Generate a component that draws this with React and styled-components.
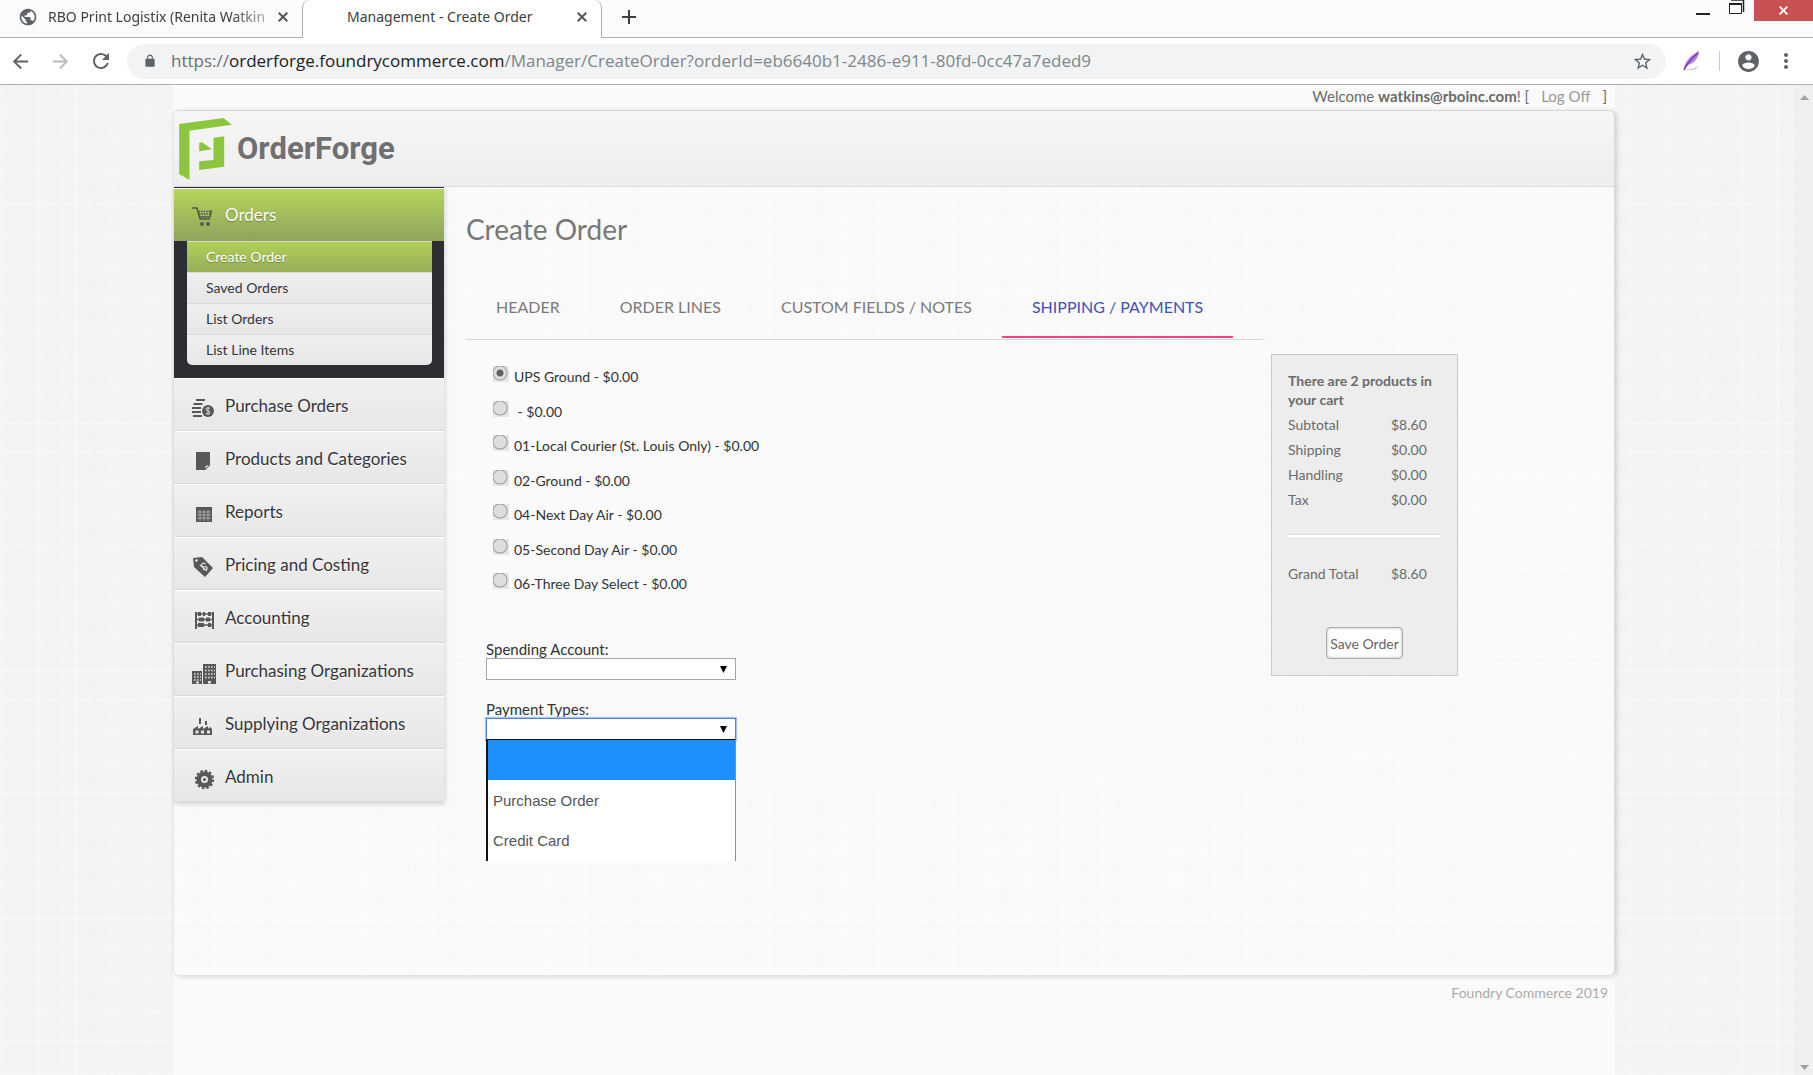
import React, { useState } from "react";
import styled, { createGlobalStyle, css } from "styled-components";

const siteFont = '"Lato", "Open Sans", sans-serif';
const chromeFont = '"Noto Sans", "Open Sans", sans-serif';

const GlobalStyle = createGlobalStyle`
  *, *::before, *::after { box-sizing: border-box; }
  body { margin: 0; background: #f4f4f4; font-family: ${siteFont}; color: #6b6b6b; }
  ul { list-style: none; margin: 0; padding: 0; }
  button { font-family: inherit; cursor: pointer; }
  a { text-decoration: none; color: inherit; }
`;

const linen = css`
  background-image:
    repeating-linear-gradient(90deg, rgba(0, 0, 0, 0.004) 0 2px, transparent 4px 9px, rgba(0, 0, 0, 0.004) 10px 11px, transparent 13px 23px),
    repeating-linear-gradient(90deg, rgba(255, 255, 255, 0.2) 0 3px, transparent 6px 17px, rgba(0, 0, 0, 0.004) 19px, transparent 21px 37px),
    repeating-linear-gradient(0deg, rgba(0, 0, 0, 0.004) 0 1px, transparent 3px 8px, rgba(0, 0, 0, 0.004) 9px 11px, transparent 12px 19px),
    repeating-linear-gradient(0deg, rgba(255, 255, 255, 0.2) 0 2px, transparent 5px 14px, rgba(0, 0, 0, 0.004) 16px, transparent 18px 31px);
`;

const Window = styled.div`
  min-height: 100vh;
  display: flex;
  flex-direction: column;
`;

/* ---------- browser chrome ---------- */

const TabStrip = styled.header`
  display: flex;
  height: 38px;
  background: #fbfbfb;
  border-bottom: 1px solid #b0b0b0;
  font-family: ${chromeFont};
`;

const PlainButton = styled.button`
  display: flex;
  align-items: center;
  justify-content: center;
  width: ${(p) => p.$w}px;
  height: ${(p) => p.$h || 34}px;
  padding: 0;
  border: 0;
  background: ${(p) => p.$bg || "transparent"};
  color: ${(p) => p.$color || "#55585c"};
`;

const BrowserTab = styled.div`
  display: flex;
  align-items: center;
  width: ${(p) => (p.$active ? 300 : 302)}px;
  height: 38px;
  padding: 0 8px 4px ${(p) => (p.$active ? 44 : 18)}px;
  ${(p) =>
    p.$active &&
    css`
      background: #fff;
      border: 1px solid #b0b0b0;
      border-width: 0 1px;
      border-radius: 8px 8px 0 0;
    `}
`;

const TabTitle = styled.span`
  flex: 1;
  white-space: nowrap;
  font-size: 14px;
  line-height: 20px;
  margin-left: ${(p) => (p.$icon ? 10 : 0)}px;
  color: #3c4043;
  ${(p) => p.$icon && "mask-image: linear-gradient(90deg, #000 82%, rgba(0, 0, 0, 0.3) 100%);"}
`;

const WindowButtons = styled.div`
  display: flex;
  align-items: flex-start;
  margin-left: auto;
`;

const Toolbar = styled.div`
  display: flex;
  align-items: center;
  height: 47px;
  padding: 0 8px 0 0;
  background: #fff;
  border-bottom: 1px solid #b0b0b0;
`;

const Omnibox = styled.div`
  display: flex;
  align-items: center;
  flex: 1;
  height: 35px;
  margin: 0 8px 0 6px;
  padding: 0 6px 0 16px;
  border-radius: 18px;
  background: #f1f3f4;
  font: 17px/24px "Open Sans", "Noto Sans", sans-serif;
  color: #80868b;
`;

const Url = styled.span`
  flex: 1;
  margin-left: 14px;
  white-space: nowrap;
  b { font-weight: 400; color: #202124; }
  i { font-style: normal; color: #6b6f73; }
`;

const Divider = styled.span`
  width: 1px;
  height: 20px;
  margin: 0 9px;
  background: #c8cacc;
`;

/* ---------- page shell ---------- */

const Viewport = styled.div`
  flex: 1;
  display: flex;
`;

const Page = styled.div`
  flex: 1;
  display: flex;
  padding: 0 180px 0 173px;
  ${linen}
`;

const ScrollTrack = styled.div`
  display: flex;
  flex-direction: column;
  justify-content: space-between;
  align-items: center;
  width: 18px;
  padding: 10px 0 5px;
  background: #f0f0f0;
`;

const Column = styled.div`
  flex: 1;
  background: #fafafa;
`;

const Welcome = styled.div`
  display: flex;
  justify-content: flex-end;
  height: 25px;
  padding-right: 8px;
  font-size: 15px;
  line-height: 23px;
  white-space: pre;
  a { margin: 0 12px; color: #999; }
`;

const Box = styled.div`
  min-height: 866px;
  border: 1px solid #d8d8d8;
  border-left-color: #e8e8e8;
  border-bottom-color: #e4e4e4;
  border-radius: 6px;
  background-color: #fafafa;
  box-shadow: 2px 1px 5px rgba(0, 0, 0, 0.14);
  ${linen}
`;

const Brand = styled.div`
  display: flex;
  align-items: center;
  gap: 5px;
  height: 76px;
  padding: 0 5px;
  border-bottom: 1px solid #ddd;
  border-radius: 6px 6px 0 0;
  background: linear-gradient(#f6f6f6, #eee);
  color: #707070;
  font: 700 31px/36px Roboto, sans-serif;
`;

const Body = styled.div`
  display: flex;
  align-items: flex-start;
`;

/* ---------- side menu ---------- */

const Side = styled.nav`
  width: 270px;
  border-top: 1px solid #2e2d33;
  box-shadow: 1px 2px 5px rgba(0, 0, 0, 0.16);
`;

const MenuLink = styled.a`
  display: flex;
  align-items: center;
  height: 53px;
  padding: 2px 18px 0;
  gap: 9px;
  border-top: 1px solid #fff;
  border-bottom: 1px solid #d9d9d9;
  background: linear-gradient(#f0f0f0, #e7e7e7);
  color: #35353a;
  font-size: 17px;
  text-shadow: 0 1px 0 #fff;
  svg { margin-top: 5px; }
  ${(p) =>
    p.$active &&
    css`
      padding: 0 18px 2px;
      border-bottom: 0;
      background: linear-gradient(#b5d55a, #8fa35d);
      color: #fff;
      text-shadow: 0 1px 1px rgba(0, 0, 0, 0.3);
    `}
`;

const SubMenu = styled.ul`
  padding: 0 12px 13px 13px;
  background: #2e2d33;
  li:last-child a { border-radius: 0 0 5px 5px; }
`;

const SubLink = styled.a`
  display: block;
  padding: 0 19px 1px;
  border-top: 1px solid #d9d9d9;
  background: linear-gradient(#f0f0f0, #e6e6e6);
  color: #35353a;
  font-size: 14px;
  line-height: 29px;
  ${(p) =>
    p.$active &&
    css`
      background: linear-gradient(#b0d055, #98ae5b);
      color: #fff;
      text-shadow: 0 1px 1px rgba(0, 0, 0, 0.3);
    `}
`;

/* ---------- order form ---------- */

const Main = styled.main`
  flex: 1;
  padding: 24px 156px 0 22px;
`;

const Title = styled.h1`
  margin: 0;
  font-size: 28px;
  font-weight: 400;
  line-height: 36px;
  color: #777;
`;

const Row = styled.div`
  display: flex;
  align-items: flex-start;
  gap: 8px;
`;

const FormColumn = styled.div`
  flex: 1;
`;

const Tabs = styled.div`
  display: flex;
  margin-top: 28px;
  border-bottom: 1px solid #d6d6d6;
`;

const Tab = styled.button`
  height: 63px;
  margin-bottom: 1px;
  padding: 2px 30px 0;
  border: 0;
  border-bottom: 2px solid ${(p) => (p.$active ? "#ff4081" : "transparent")};
  background: none;
  font-size: 16px;
  white-space: nowrap;
  color: ${(p) => (p.$active ? "#3f51b5" : "#7a7a7a")};
`;

const Panel = styled.div`
  min-height: 440px;
  padding: 26px 20px 0;
  background: #fafafa;
  color: #333;
  font-size: 14px;
`;

const Options = styled.div`
  display: flex;
  flex-direction: column;
  justify-content: space-between;
  min-height: 229px;
  margin: 0 0 45px;
  padding-left: 7px;
`;

const Option = styled.label`
  display: flex;
  gap: 5px;
  height: 22px;
  line-height: 22px;
  white-space: pre;
`;

const Radio = styled.input`
  appearance: none;
  width: 16px;
  height: 16px;
  margin: 0;
  background:
    radial-gradient(circle at 7px 7px, ${(p) => (p.checked ? "#606060 0 3px, " : "")}#dedede 4px 6px, #9a9a9a 7px, #e6e6e6 8px);
`;

const Field = styled.div`
  display: flex;
  flex-direction: column;
  width: 250px;
  margin-bottom: 20px;
  label { font-size: 15px; line-height: 18px; }
`;

const SelectWrap = styled.div`
  position: relative;
  display: flex;
`;

const Select = styled.select`
  appearance: none;
  flex: 1;
  height: 22px;
  padding: 0 24px 0 4px;
  border: 1px solid ${(p) => (p.$open ? "#4f86dd" : "#a6a6a6")};
  border-radius: 0;
  background: #fff;
  outline: 0;
  box-shadow: ${(p) => (p.$open ? "0 0 1px 1px #a8c4f0" : "none")};
`;

const Caret = styled.svg`
  position: absolute;
  right: 9px;
  top: 8px;
  pointer-events: none;
`;

const List = styled.ul`
  position: absolute;
  top: 21px;
  left: 0;
  right: 0;
  z-index: 2;
  padding-bottom: 1px;
  border: 1px solid #6f93cf;
  border-width: 1px 1px 0;
  border-top-color: #111;
  border-left: 2px solid #111;
  background: #fff;
`;

const ListItem = styled.li`
  height: 40px;
  padding: 0 5px;
  font: 15px/42px "Liberation Sans", Arial, sans-serif;
  color: #555;
  background: ${(p) => (p.$selected ? "#1e90ff" : "transparent")};
`;

/* ---------- cart ---------- */

const Cart = styled.aside`
  width: 187px;
  margin-top: 107px;
  padding: 16px;
  border: 1px solid #c8c8c8;
  background: #ededed;
  font-size: 14px;
  color: #6b6b6b;
`;

const CartTitle = styled.h2`
  margin: 0 0 3px;
  font-size: 14px;
  font-weight: 700;
  line-height: 19px;
`;

const Totals = styled.table`
  width: 100%;
  border-collapse: collapse;
  th { width: 103px; font-weight: 400; text-align: left; }
  th, td { padding: 0; height: 25px; line-height: 25px; }
`;

const Rule = styled.hr`
  margin: 22px 0 24px;
  border: 0;
  border-top: 1px solid #ddd;
  border-bottom: 2px solid #fff;
`;

const Save = styled.button`
  display: block;
  height: 32px;
  margin: 41px auto 0;
  padding: 0 3px;
  border: 1px solid #aaa;
  border-radius: 4px;
  background: #fff;
  box-shadow: inset 0 0 3px rgba(0, 0, 0, 0.3);
  font-size: 14px;
  white-space: nowrap;
  color: #666;
`;

const Footer = styled.footer`
  padding: 6px 7px 0;
  text-align: right;
  font-size: 14px;
  line-height: 22px;
  color: #aaa;
`;

/* ---------- drawings ---------- */

const Cross = ({ size = 10, width = 2 }) => (
  <svg width={size} height={size} viewBox="0 0 10 10" stroke="currentColor" strokeWidth={width}>
    <path d="M.7.7l8.6 8.6M9.3.7L.7 9.3" />
  </svg>
);

const Material = ({ d, size = 24, color = "#5f6368" }) => (
  <svg width={size} height={size} viewBox="0 0 24 24" fill={color}>
    <path d={d} />
  </svg>
);

const paths = {
  back: "M20 11H7.83l5.59-5.59L12 4l-8 8 8 8 1.41-1.41L7.83 13H20v-2z",
  forward: "M12 4l-1.41 1.41L16.17 11H4v2h12.17l-5.58 5.59L12 20l8-8z",
  reload:
    "M17.65 6.35C16.2 4.9 14.21 4 12 4c-4.42 0-7.99 3.58-7.99 8s3.57 8 7.99 8c3.73 0 6.84-2.55 7.73-6h-2.08c-.82 2.33-3.04 4-5.65 4-3.31 0-6-2.69-6-6s2.69-6 6-6c1.66 0 3.14.69 4.22 1.78L13 11h7V4l-2.35 2.35z",
  lock: "M18 8h-1V6c0-2.76-2.24-5-5-5S7 3.24 7 6v2H6c-1.1 0-2 .9-2 2v10c0 1.1.9 2 2 2h12c1.1 0 2-.9 2-2V10c0-1.1-.9-2-2-2zm-2.9 0H8.9V6c0-1.71 1.39-3.1 3.1-3.1s3.1 1.39 3.1 3.1v2z",
  star: "M22 9.24l-7.19-.62L12 2 9.19 8.63 2 9.24l5.46 4.73L5.82 21 12 17.27 18.18 21l-1.63-7.03L22 9.24zM12 15.4l-3.76 2.27 1-4.28-3.32-2.88 4.38-.38L12 6.1l1.71 4.04 4.38.38-3.32 2.88 1 4.28L12 15.4z",
  user: "M12 2C6.48 2 2 6.48 2 12s4.48 10 10 10 10-4.48 10-10S17.52 2 12 2zm0 3c1.66 0 3 1.34 3 3s-1.34 3-3 3-3-1.34-3-3 1.34-3 3-3zm0 14.2c-2.5 0-4.71-1.28-6-3.22.03-1.99 4-3.08 6-3.08 1.99 0 5.97 1.09 6 3.08-1.29 1.94-3.5 3.22-6 3.22z",
  dots: "M12 8c1.1 0 2-.9 2-2s-.9-2-2-2-2 .9-2 2 .9 2 2 2zm0 2c-1.1 0-2 .9-2 2s.9 2 2 2 2-.9 2-2-.9-2-2-2zm0 6c-1.1 0-2 .9-2 2s.9 2 2 2 2-.9 2-2-.9-2-2-2z",
  globe:
    "M12 2C6.48 2 2 6.48 2 12s4.48 10 10 10 10-4.48 10-10S17.52 2 12 2zm-1 17.93c-3.95-.49-7-3.85-7-7.93 0-.62.08-1.21.21-1.79L9 15v1c0 1.1.9 2 2 2v1.93zm6.9-2.54c-.26-.81-1-1.39-1.9-1.39h-1v-3c0-.55-.45-1-1-1H8v-2h2c.55 0 1-.45 1-1V7h2c1.1 0 2-.9 2-2v-.41c2.93 1.19 5 4.06 5 7.41 0 2.08-.8 3.97-2.1 5.39z",
};

const Feather = () => (
  <svg width="20" height="22" viewBox="0 0 20 22">
    <path d="M2 19C3 11 9 5 17 1c0 6-4 12-11 14z" fill="#b57ddb" />
    <path d="M2 20C5 13 10 8 16 3" stroke="#7a35b0" strokeWidth="1.5" fill="none" />
    <path d="M3 20c6-1 11-2 14-4-3 4-8 5-14 4z" fill="#c4c4c4" />
  </svg>
);

const Logo = () => (
  <svg width="53" height="62" viewBox="57 84 158 186" fill="#8cc63f">
    <path d="M57 102L190 84l25 20-127 18v148l-31-18z" />
    <path d="M160 143l32-4v91l-75 10v-26l43-4z" />
    <path d="M117 158l9-1 29 21-38 6z" />
  </svg>
);

const G = "#58585a";
const glyphs = {
  cart: (
    <g>
      <path d="M0 2h5l3 11h10" fill="none" stroke="#55584a" strokeWidth="1.6" />
      <path d="M19.5 4L18 11H8" fill="none" stroke="#55584a" strokeWidth="1.6" />
      <path d="M6.5 5.5h11.5M7 8h11" stroke="#55584a" strokeWidth="1.6" strokeDasharray="1.5 1" />
      <circle cx="10" cy="18" r="2" />
      <circle cx="16" cy="18" r="2" />
    </g>
  ),
  coins: (
    <g>
      <path d="M4 1h9v2H4zM1.5 5h9v2h-9zM0 9h9v2H0zM0 13h9v2H0zM1 17h9v2H1z" />
      <circle cx="16" cy="13" r="6" />
      <path d="M18 10.5c-1.5-1.3-4-.9-4 .8s4 1.4 4 3.2-2.5 2-4 .7M16 9v8" fill="none" stroke="#ddd" />
    </g>
  ),
  page: (
    <g>
      <path d="M4 1h14v13l-5 5H4z" />
      <path d="M13 19v-3.5l1.5-1.5H18z" fill="#ddd" stroke={G} />
    </g>
  ),
  grid: (
    <g>
      <path d="M4 3h16v15H4z" />
      <path d="M5 8h14M5 11h14M5 14h14M8 6v11M12 6v11M16 6v11" stroke="#bbb" strokeWidth="0.8" />
    </g>
  ),
  tag: (
    <g>
      <path d="M1 1l9-1 11 11-8 9L2 10z" />
      <circle cx="4.5" cy="3.5" r="1.3" fill="#eee" />
      <path d="M13.5 7c-2-2-5 0-3.5 2s4-.5 5 1.5-2 3-4 1.5M8 8l7 6" fill="none" stroke="#ddd" strokeWidth="1.2" />
    </g>
  ),
  abacus: (
    <g>
      <path d="M3 2h2v17H3zM20 2h2v17h-2z" />
      <path d="M4 4h17M4 9.5h17M4 15h17" stroke={G} strokeWidth="1.3" />
      <path d="M6 4h3M11 4h2M16 4h3M7 9.5h5M14 9.5h4M6 15h6M16 15h3" stroke={G} strokeWidth="4" />
    </g>
  ),
  buildings: (
    <g>
      <path d="M0 8h10v13H0zM11 1h13v20H11z" />
      <path d="M2 11h7M2 14h7M2 17h7M13 4h10M13 7.5h10M13 11h10M13 14.5h10" stroke="#ddd" strokeWidth="1.6" strokeDasharray="1.6 1.4" />
      <path d="M4 18.5h3v2H4zM16 18h3v2.500h-3z" fill="#ddd" />
    </g>
  ),
  factory: (
    <g>
      <path d="M1 19v-6l5-3v3l5-3v3l5-3v3l2-2 2 2v6z" />
      <path d="M7 2h2v6H7zM13 5h2v4h-2z" />
      <path d="M3.5 14.5h3v3h-3zM9 14.5h3v3H9zM15 14.5h3v3h-3z" fill="#e4e4e4" />
    </g>
  ),
  gear: (
    <g>
      <circle cx="12.5" cy="10.5" r="8.7" fill="none" stroke={G} strokeWidth="2" strokeDasharray="2.6 1.95" />
      <circle cx="12.5" cy="10.5" r="8" />
      <circle cx="12.5" cy="10.5" r="3.5" fill="#e6e6e6" />
      <circle cx="12.5" cy="10.5" r="1.5" />
    </g>
  ),
};

const Glyph = ({ name }) => (
  <svg width="24" height="21" viewBox="0 0 24 21" fill={G} aria-hidden="true">
    {glyphs[name]}
  </svg>
);

/* ---------- data ---------- */

const orderLinks = ["Create Order", "Saved Orders", "List Orders", "List Line Items"];
const menu = [
  ["Purchase Orders", "coins"],
  ["Products and Categories", "page"],
  ["Reports", "grid"],
  ["Pricing and Costing", "tag"],
  ["Accounting", "abacus"],
  ["Purchasing Organizations", "buildings"],
  ["Supplying Organizations", "factory"],
  ["Admin", "gear"],
];
const formTabs = ["HEADER", "ORDER LINES", "CUSTOM FIELDS / NOTES", "SHIPPING / PAYMENTS"];
const shipping = [
  "UPS Ground - $0.00",
  " - $0.00",
  "01-Local Courier (St. Louis Only) - $0.00",
  "02-Ground - $0.00",
  "04-Next Day Air - $0.00",
  "05-Second Day Air - $0.00",
  "06-Three Day Select - $0.00",
];
const totals = [
  ["Subtotal", "$8.60"],
  ["Shipping", "$0.00"],
  ["Handling", "$0.00"],
  ["Tax", "$0.00"],
];

const DownCaret = () => (
  <Caret width="7" height="7" viewBox="0 0 7 7">
    <path d="M0 0h7L3.5 7z" />
  </Caret>
);

function Browser() {
  return (
    <>
      <TabStrip>
        <BrowserTab>
          <Material d={paths.globe} size={20} />
          <TabTitle $icon>RBO Print Logistix (Renita Watkin</TabTitle>
          <PlainButton $w={22} aria-label="Close tab"><Cross /></PlainButton>
        </BrowserTab>
        <BrowserTab $active>
          <TabTitle>Management - Create Order</TabTitle>
          <PlainButton $w={22} aria-label="Close tab"><Cross /></PlainButton>
        </BrowserTab>
        <PlainButton $w={54} aria-label="New tab" $color="#3c4043">
          <svg width="14" height="14" viewBox="0 0 14 14" stroke="currentColor" strokeWidth="2"><path d="M7 0v14M0 7h14" /></svg>
        </PlainButton>
        <WindowButtons>
          <PlainButton $w={34} $h={21} aria-label="Minimize" $color="#222">
            <svg width="14" height="14" viewBox="0 0 14 14"><path d="M0 9h14v2H0z" fill="currentColor" /></svg>
          </PlainButton>
          <PlainButton $w={34} $h={14} aria-label="Restore" $color="#222">
            <svg width="16" height="16" viewBox="0 0 16 16" fill="none" stroke="currentColor"><path d="M2 1h12.5V13" strokeWidth="1.5" /><path d="M.5 4.5h12v10H.5z" fill="#fff" /><path d="M0 5h13" strokeWidth="2" /></svg>
          </PlainButton>
          <PlainButton $w={59} $h={21} $bg="#c75050" $color="#fff" aria-label="Close"><Cross size={9} width={2} /></PlainButton>
        </WindowButtons>
      </TabStrip>
      <Toolbar>
        <PlainButton $w={40} aria-label="Back"><Material d={paths.back} size={23} /></PlainButton>
        <PlainButton $w={41} aria-label="Forward"><Material d={paths.forward} size={23} color="#bbb" /></PlainButton>
        <PlainButton $w={40} aria-label="Reload"><Material d={paths.reload} size={24} /></PlainButton>
        <Omnibox>
          <Material d={paths.lock} size={14} />
          <Url><i>https://</i><b>orderforge.foundrycommerce.com</b>/Manager/CreateOrder?orderId=eb6640b1-2486-e911-80fd-0cc47a7eded9</Url>
          <PlainButton $w={36} aria-label="Bookmark"><Material d={paths.star} size={21} /></PlainButton>
        </Omnibox>
        <PlainButton $w={36} aria-label="Feather extension"><Feather /></PlainButton>
        <Divider />
        <PlainButton $w={38} aria-label="Profile"><Material d={paths.user} size={25} /></PlainButton>
        <PlainButton $w={38} aria-label="Menu"><Material d={paths.dots} size={24} /></PlainButton>
      </Toolbar>
    </>
  );
}

function Sidebar() {
  return (
    <Side>
      <MenuLink href="#orders" $active><Glyph name="cart" />Orders</MenuLink>
      <SubMenu>
        {orderLinks.map((name, i) => (
          <li key={name}><SubLink href="#orders" $active={i === 0}>{name}</SubLink></li>
        ))}
      </SubMenu>
      {menu.map(([name, icon]) => (
        <MenuLink key={name} href="#menu"><Glyph name={icon} />{name}</MenuLink>
      ))}
    </Side>
  );
}

function ShippingForm() {
  const [method, setMethod] = useState(0);
  return (
    <Panel>
      <Options role="radiogroup" aria-label="Shipping method">
        {shipping.map((name, i) => (
          <Option key={name}>
            <Radio type="radio" name="method" checked={method === i} onChange={() => setMethod(i)} />
            <span>{name}</span>
          </Option>
        ))}
      </Options>
      <Field>
        <label htmlFor="account">Spending Account:</label>
        <SelectWrap>
          <Select id="account"><option></option></Select>
          <DownCaret />
        </SelectWrap>
      </Field>
      <Field>
        <label htmlFor="payment">Payment Types:</label>
        <SelectWrap>
          <Select id="payment" $open><option></option><option>Purchase Order</option><option>Credit Card</option></Select>
          <DownCaret />
          <List role="listbox" aria-label="Payment Types">
            <ListItem role="option" aria-selected="true" $selected />
            <ListItem role="option" aria-selected="false">Purchase Order</ListItem>
            <ListItem role="option" aria-selected="false">Credit Card</ListItem>
          </List>
        </SelectWrap>
      </Field>
    </Panel>
  );
}

function CartSummary() {
  return (
    <Cart>
      <CartTitle>There are 2 products in your cart</CartTitle>
      <Totals>
        <tbody>
          {totals.map(([name, value]) => (
            <tr key={name}><th scope="row">{name}</th><td>{value}</td></tr>
          ))}
        </tbody>
      </Totals>
      <Rule />
      <Totals>
        <tbody><tr><th scope="row">Grand Total</th><td>$8.60</td></tr></tbody>
      </Totals>
      <Save>Save Order</Save>
    </Cart>
  );
}

export default function App() {
  return (
    <Window>
      <GlobalStyle />
      <Browser />
      <Viewport>
        <Page>
          <Column>
            <Welcome>Welcome <b>watkins@rboinc.com</b>! [<a href="#logoff">Log Off</a>]</Welcome>
            <Box>
              <Brand><Logo />OrderForge</Brand>
              <Body>
                <Sidebar />
                <Main>
                  <Title>Create Order</Title>
                  <Row>
                    <FormColumn>
                      <Tabs role="tablist">
                        {formTabs.map((name, i) => (
                          <Tab key={name} role="tab" aria-selected={i === 3} $active={i === 3}>{name}</Tab>
                        ))}
                      </Tabs>
                      <ShippingForm />
                    </FormColumn>
                    <CartSummary />
                  </Row>
                </Main>
              </Body>
            </Box>
            <Footer>Foundry Commerce 2019</Footer>
          </Column>
        </Page>
        <ScrollTrack>
          <svg width="9" height="5" viewBox="0 0 9 5" fill="#a0a0a0"><path d="M0 5h9L4.5 0z" /></svg>
          <svg width="9" height="5" viewBox="0 0 9 5" fill="#a0a0a0"><path d="M0 0h9L4.5 5z" /></svg>
        </ScrollTrack>
      </Viewport>
    </Window>
  );
}
